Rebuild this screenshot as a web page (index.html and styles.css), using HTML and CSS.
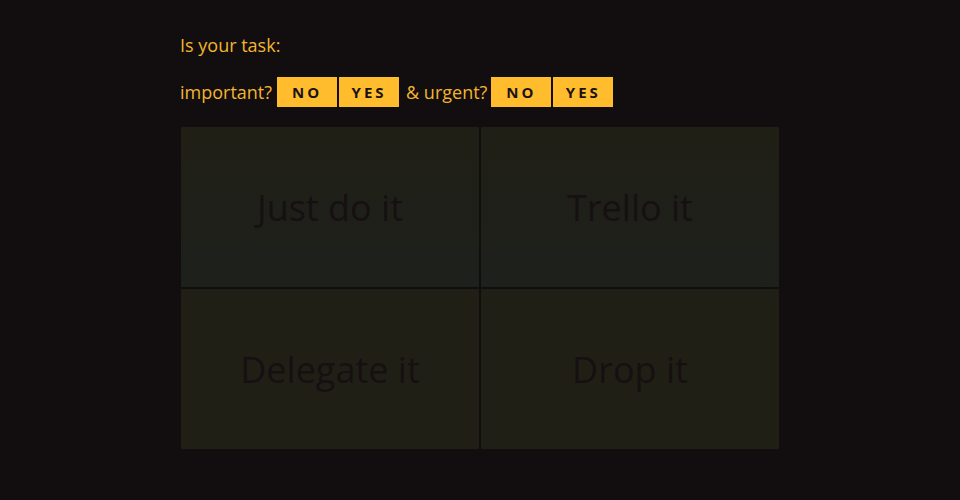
FILE: index.html
```html
<!DOCTYPE html>
<html lang="en">
<head>
  <meta charset="UTF-8" />
  <meta name="viewport" content="width=device-width, initial-scale=1" />
  <title>Eisenhower Matrix</title>
  <link rel="stylesheet" href="styles.css">
</head>
<body>

  <main class="wrap">
    <p class="question">Is your task:</p>

    <div class="answers">
      <span class="label label-first">important?</span>
      <button class="btn">NO</button>
      <button class="btn">YES</button>
      <span class="label">&amp; urgent?</span>
      <button class="btn">NO</button>
      <button class="btn">YES</button>
    </div>

    <!-- the four quadrants -->
    <div class="matrix">
      <div class="cell cell-top">Just do it</div>
      <div class="cell cell-top">Trello it</div>
      <div class="cell">Delegate it</div>
      <div class="cell">Drop it</div>
    </div>
  </main>

</body>
</html>
```

FILE: styles.css
```css
body {
  margin: 0;
  background: #120d0f;
  color: #f2b52e;
  font-family: "Open Sans", "Liberation Sans", sans-serif;
}
.wrap {
  width: 600px;
  margin: 0 auto;
  padding-top: 33px;
}
.question {
  margin: 0;
  font-size: 18px;
  line-height: 24px;
}
.answers {
  display: flex;
  align-items: center;
  gap: 2px;
  margin-top: 20px;
  font-size: 18px;
}
.label {
  margin: 0 2px 0 5px;
}
.label-first {
  margin-left: 0;
  margin-right: 3px;
}
.btn {
  width: 60px;
  height: 30px;
  border: none;
  padding: 0;
  background: #ffbd2e;
  color: #1a1214;
  font-family: "Open Sans", "Liberation Sans", sans-serif;
  font-weight: bold;
  font-size: 15px;
  letter-spacing: 3px;
}
.matrix {
  display: grid;
  grid-template-columns: 300px 300px;
  grid-template-rows: 162px 162px;
  margin-top: 19px;
}
.cell {
  display: flex;
  align-items: center;
  justify-content: center;
  border: 1px solid #120d0f;
  background: #1f1f15;
  color: #161013;
  font-size: 36px;
}
.cell-top {
  background: linear-gradient(#1f1f15, #1e201c);
}
```
